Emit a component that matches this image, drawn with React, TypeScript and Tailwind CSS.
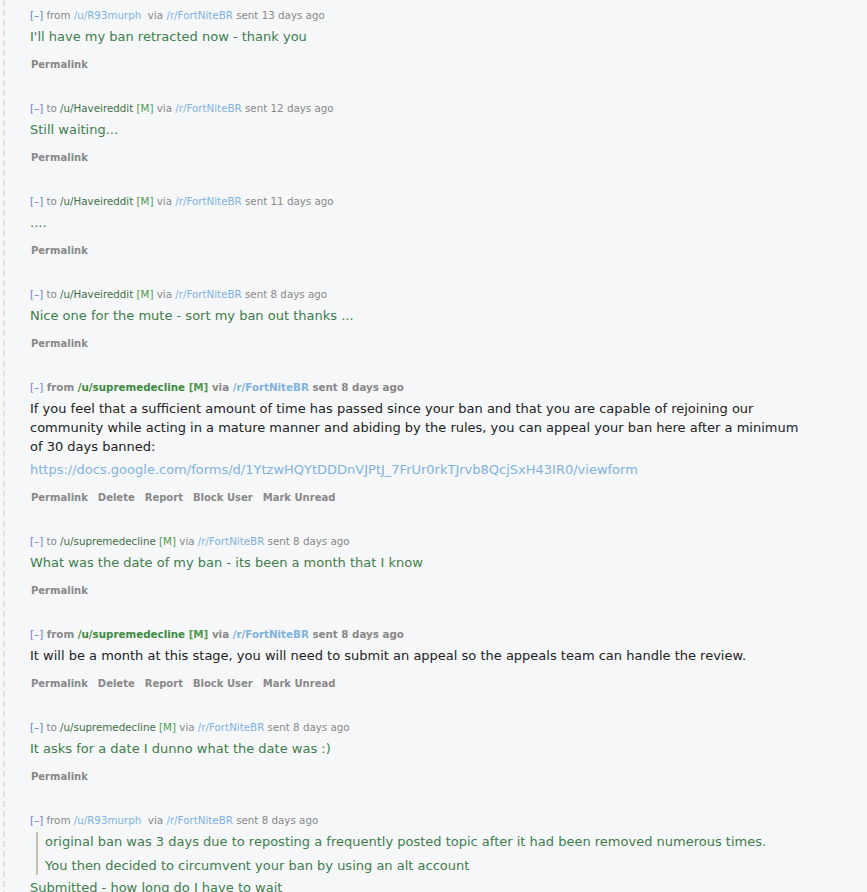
import React from "react";

const LINK = "text-[#7fb2e0]";
const GRAY = "text-[#888888]";

type Msg = {
  dir: "from" | "to";
  user: string;
  mod?: boolean;
  bold?: boolean;
  ago: string;
  body: React.ReactNode;
  full?: boolean;
  green?: boolean;
};

function Tagline({ m }: { m: Msg }) {
  const userColor =
    m.dir === "from" && !m.mod ? LINK : m.bold ? "text-[#3d8a3d]" : "text-[#3f7046]";
  return (
    <div
      className={`text-[10.3px] leading-[16px] ${GRAY} ${m.bold ? "font-bold" : ""} whitespace-pre`}
    >
      <span className="text-[#6a7fd0] font-normal">[–]</span> {m.dir} <span className={userColor}>/u/{m.user}</span>
      {m.mod ? (
        <>
          {" "}
          <span className="text-[#4f9a4f]">[M]</span>
        </>
      ) : (
        <span> </span>
      )}{" "}
      via <span className={LINK}>/r/FortNiteBR</span> sent {m.ago}
    </div>
  );
}

function Buttons({ full }: { full?: boolean }) {
  const items = full ? ["Permalink", "Delete", "Report", "Block User", "Mark Unread"] : ["Permalink"];
  return (
    <div className="flex gap-[10px] pl-[1px] text-[10px] leading-[14px] font-bold text-[#888888] mt-[12px]">
      {items.map((i) => (
        <span key={i}>{i}</span>
      ))}
    </div>
  );
}

function Message({ m, last }: { m: Msg; last?: boolean }) {
  return (
    <div className={last ? "pt-[7px]" : "pt-[7px] pb-[21px]"}>
      <Tagline m={m} />
      <div
        className={`mt-[4px] text-[13px] leading-[19px] max-w-[775px] ${
          m.green ? "text-[#3f7d4c]" : "text-[#222222]"
        }`}
      >
        {m.body}
      </div>
      {!last && <Buttons full={m.full} />}
    </div>
  );
}

const msgs: Msg[] = [
  { dir: "from", user: "R93murph", ago: "13 days ago", green: true, body: <p>I'll have my ban retracted now - thank you</p> },
  { dir: "to", user: "Haveireddit", mod: true, ago: "12 days ago", green: true, body: <p>Still waiting...</p> },
  { dir: "to", user: "Haveireddit", mod: true, ago: "11 days ago", green: true, body: <p>....</p> },
  { dir: "to", user: "Haveireddit", mod: true, ago: "8 days ago", green: true, body: <p>Nice one for the mute - sort my ban out thanks ...</p> },
  {
    dir: "from",
    user: "supremedecline",
    mod: true,
    bold: true,
    full: true,
    ago: "8 days ago",
    body: (
      <>
        <p className="mb-[4px]">
          If you feel that a sufficient amount of time has passed since your ban and that you are capable of
          rejoining our community while acting in a mature manner and abiding by the rules, you can appeal your ban
          here after a minimum of 30 days banned:
        </p>
        <p className={LINK}>https://docs.google.com/forms/d/1YtzwHQYtDDDnVJPtJ_7FrUr0rkTJrvb8QcjSxH43IR0/viewform</p>
      </>
    ),
  },
  { dir: "to", user: "supremedecline", mod: true, ago: "8 days ago", green: true, body: <p>What was the date of my ban - its been a month that I know</p> },
  {
    dir: "from",
    user: "supremedecline",
    mod: true,
    bold: true,
    full: true,
    ago: "8 days ago",
    body: <p>It will be a month at this stage, you will need to submit an appeal so the appeals team can handle the review.</p>,
  },
  { dir: "to", user: "supremedecline", mod: true, ago: "8 days ago", green: true, body: <p>It asks for a date I dunno what the date was :)</p> },
  {
    dir: "from",
    user: "R93murph",
    ago: "8 days ago",
    green: true,
    body: (
      <>
        <blockquote className="ml-[6px] mb-[3px] border-l-2 border-[#c5c1ad] pl-[7px]">
          <p className="mb-[5px]">
            original ban was 3 days due to reposting a frequently posted topic after it had been removed numerous
            times.
          </p>
          <p>You then decided to circumvent your ban by using an alt account</p>
        </blockquote>
        <p>Submitted - how long do I have to wait</p>
      </>
    ),
  },
];

export default function App() {
  return (
    <div
      className="w-[867px] h-[892px] overflow-hidden bg-[#f6f7f8]"
      style={{ fontFamily: '"DejaVu Sans", Verdana, sans-serif' }}
    >
      <div className="ml-[3px] border-l-2 border-dashed border-[#e2e2e2] pl-[25px] min-h-[892px]">
        {msgs.map((m, i) => (
          <Message key={i} m={m} last={i === msgs.length - 1} />
        ))}
      </div>
    </div>
  );
}
